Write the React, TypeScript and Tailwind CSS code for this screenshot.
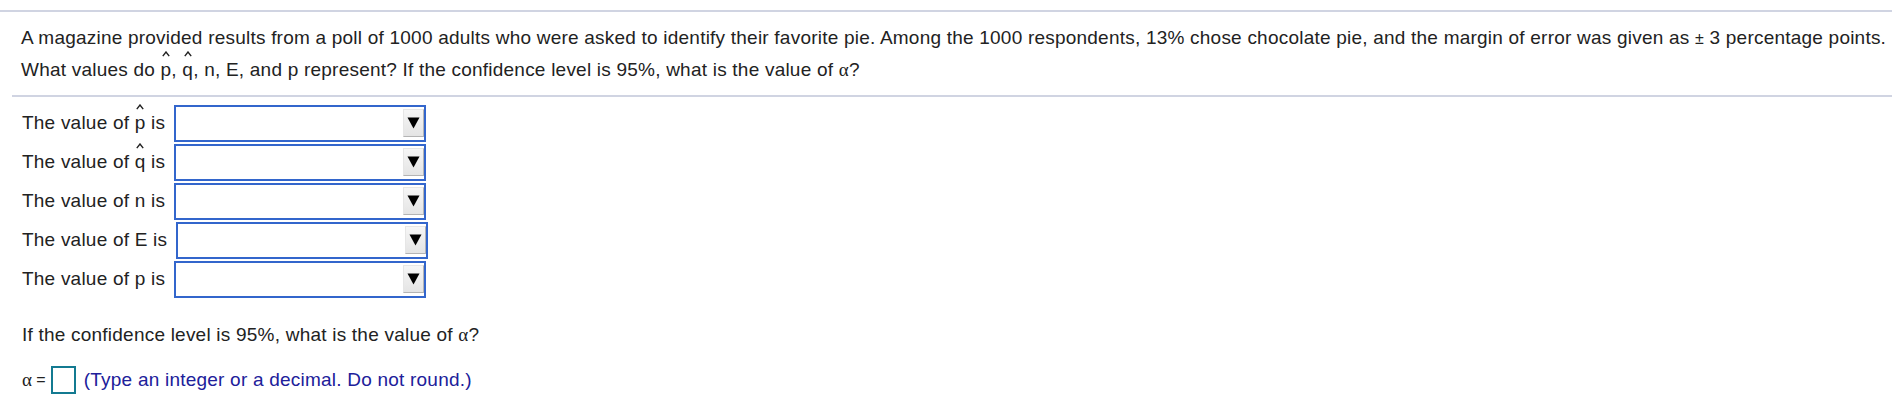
import React from "react";

function Hat({ ch }: { ch: string }) {
  return (
    <span className="relative inline-block leading-none">
      {ch}
      <svg
        className="absolute left-1/2 top-[-9px] -translate-x-1/2"
        width="8"
        height="6"
        viewBox="0 0 8 6"
      >
        <polyline points="0.8,5.2 4,1 7.2,5.2" fill="none" stroke="#222" strokeWidth="1.4" />
      </svg>
    </span>
  );
}

function Dropdown() {
  return (
    <div className="relative ml-[9px] h-[37px] w-[252px] border-2 border-[#3366cc] bg-white">
      <div className="absolute right-0 top-[2px] flex h-[28px] w-[21px] items-center justify-center border border-t-[#e6e6e6] border-l-[#e6e6e6] border-r-[#b4b4b4] border-b-[#b4b4b4] bg-[linear-gradient(#f6f6f6,#e4e4e4)]">
        <svg width="13" height="12" viewBox="0 0 13 12">
          <polygon points="0.5,0.5 12.5,0.5 6.5,11.5" fill="#000" />
        </svg>
      </div>
    </div>
  );
}

const serif = { fontFamily: '"Liberation Serif", serif' };

export default function App() {
  const rows: React.ReactNode[] = [
    <>The value of <Hat ch="p" /> is</>,
    <>The value of <Hat ch="q" /> is</>,
    <>The value of n is</>,
    <>The value of E is</>,
    <>The value of p is</>,
  ];
  return (
    <div
      className="h-[409px] w-full bg-white text-[19px] tracking-[0.22px] text-[#222]"
      style={{ fontFamily: '"Liberation Sans", Arial, sans-serif' }}
    >
      <div className="pt-[10px]">
        <div className="h-[2px] bg-[#d0d4e2]" />
      </div>
      <div className="mt-[10px] pl-[21px] leading-[31px] whitespace-nowrap">
        A magazine provided results from a poll of 1000 adults who were asked to identify their favorite pie. Among the 1000
        respondents, 13% chose chocolate pie, and the margin of error was given as{" "}
        <span className="text-[16px]">&plusmn;</span> 3 percentage points.
        <br />
        What values do <Hat ch="p" />, <Hat ch="q" />, n, E, and p represent? If the confidence level is 95%, what is the value of{" "}
        <span style={serif}>&alpha;</span>?
      </div>
      <div className="ml-[12px] mt-[10px] h-[2px] bg-[#d0d4e2]" />
      <div className="mt-[7px] pl-[22px]">
        {rows.map((r, i) => (
          <div key={i} className="flex h-[39px] items-center">
            <span>{r}</span>
            <Dropdown />
          </div>
        ))}
      </div>
      <div className="mt-[20px] pl-[22px] leading-[31px]">
        If the confidence level is 95%, what is the value of <span style={serif}>&alpha;</span>?
      </div>
      <div className="mt-[16px] flex items-center pl-[22px]">
        <span style={serif}>&alpha;</span>
        <span className="ml-[4px] text-[16px]">=</span>
        <div className="ml-[5px] h-[28px] w-[25px] border-2 border-[#137a91] bg-white" />
        <span className="ml-[8px] text-[#20209a]">(Type an integer or a decimal. Do not round.)</span>
      </div>
    </div>
  );
}
